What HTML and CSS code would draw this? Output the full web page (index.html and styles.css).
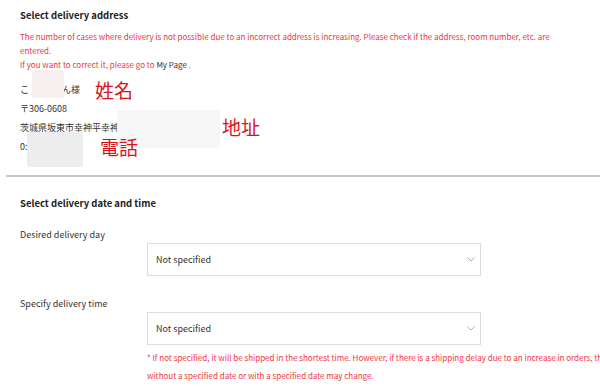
FILE: index.html
```
<!DOCTYPE html>
<html lang="ja">
<head>
  <meta charset="UTF-8">
  <meta name="viewport" content="width=device-width, initial-scale=1.0">
  <link rel="stylesheet" href="styles.css">
  <title>Delivery</title>
</head>
<body>
<div class="page">
  <section class="address-section">
    <h2 class="section-title">Select delivery address</h2>
    <p class="notice">
      The number of cases where delivery is not possible due to an incorrect address is increasing. Please check if the address, room number, etc. are entered.<br>
      If you want to correct it, please go to <a href="#" class="notice-link">My Page</a> .
    </p>
    <div class="address">
      <p>こ<span class="gap"></span>ん様</p>
      <p>〒306-0608</p>
      <p>茨城県坂東市幸神平幸神</p>
      <p>0:</p>
      <!-- masked personal info -->
      <span class="mask mask-name"></span>
      <span class="mask mask-addr"></span>
      <span class="mask mask-tel"></span>
      <span class="tag tag-name">姓名</span>
      <span class="tag tag-addr">地址</span>
      <span class="tag tag-tel">電話</span>
    </div>
  </section>

  <hr class="divider">

  <section class="date-section">
    <h2 class="section-title">Select delivery date and time</h2>
    <div class="field">
      <label for="day">Desired delivery day</label>
      <div class="select-box">
        <select id="day"><option>Not specified</option></select>
        <svg class="chevron" width="8" height="5" viewBox="0 0 8 5"><polyline points="0.5,0.5 4,4 7.5,0.5" fill="none" stroke="#999" stroke-width="0.8"/></svg>
      </div>
    </div>
    <div class="field">
      <label for="time">Specify delivery time</label>
      <div class="select-box">
        <select id="time"><option>Not specified</option></select>
        <svg class="chevron" width="8" height="5" viewBox="0 0 8 5"><polyline points="0.5,0.5 4,4 7.5,0.5" fill="none" stroke="#999" stroke-width="0.8"/></svg>
      </div>
      <p class="field-note">
        * If not specified, it will be shipped in the shortest time. However, if there is a shipping delay due to an increase in orders, the order<br>
        without a specified date or with a specified date may change.
      </p>
    </div>
  </section>
</div>
</body>
</html>
```

FILE: styles.css
```
body {
  margin: 0;
  font-family: "Noto Sans CJK JP", "Noto Sans", sans-serif;
  color: #333;
  background: #fff;
  overflow: hidden;
}

.page {
  width: 600px;
}

.address-section {
  padding: 7px 20px 0;
  height: 168px;
}

.section-title {
  margin: 0;
  font-size: 9.5px;
  line-height: 16px;
  font-weight: bold;
  color: #222;
}

.notice {
  margin: 7px 0 0;
  max-width: 552px;
  font-size: 8px;
  line-height: 14px;
  color: #f0323c;
}

.notice-link {
  color: #333;
  text-decoration: none;
}

.address {
  position: relative;
  margin-top: 8px;
  font-size: 9px;
  line-height: 19px;
}

.address p {
  margin: 0;
}

.gap {
  display: inline-block;
  width: 33px;
}

.mask {
  position: absolute;
  border-radius: 3px;
}

.mask-name {
  left: 12px;
  top: -10px;
  width: 32px;
  height: 28px;
  background: #f5efef;
}

.mask-addr {
  left: 97px;
  top: 30px;
  width: 103px;
  height: 38px;
  background: #f6f6f6;
}

.mask-tel {
  left: 7px;
  top: 52px;
  width: 56px;
  height: 35px;
  background: #ededed;
}

.tag {
  position: absolute;
  font-size: 19px;
  line-height: 20px;
  color: #d9121c;
}

.tag-name {
  left: 75px;
  top: 0;
}

.tag-addr {
  left: 202px;
  top: 37px;
}

.tag-tel {
  left: 80px;
  top: 57px;
}

.divider {
  margin: 0 0 0 6px;
  border: 0;
  border-top: 2px solid #c6c6c6;
}

.date-section {
  padding: 18px 20px 0;
}

.field {
  margin-top: 17px;
}

.field + .field {
  margin-top: 21px;
}

.field label {
  display: block;
  font-size: 9px;
  line-height: 14px;
}

.select-box {
  position: relative;
  margin: 1px 0 0 127px;
  width: 334px;
}

.select-box select {
  display: block;
  width: 100%;
  height: 33px;
  padding: 0 8px;
  border: 1px solid #dcdcdc;
  border-radius: 0;
  background: #fff;
  font-family: inherit;
  font-size: 9px;
  color: #333;
  appearance: none;
  -webkit-appearance: none;
}

.chevron {
  position: absolute;
  right: 6px;
  top: 14px;
}

.field-note {
  margin: 4px 0 0 127px;
  font-size: 8px;
  line-height: 18px;
  color: #f0323c;
  white-space: nowrap;
}
```
